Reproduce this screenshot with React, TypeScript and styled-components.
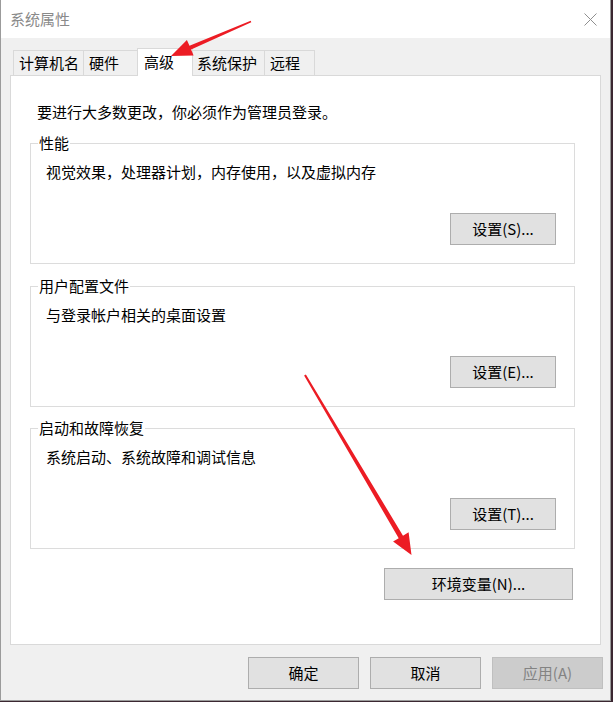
import React from 'react';
import styled, { createGlobalStyle } from 'styled-components';

const Global = createGlobalStyle`
  html, body { margin: 0; padding: 0; background: #3b2731; }
  body {
    font-family: "Noto Sans CJK SC", "Noto Sans", sans-serif;
    font-size: 15px;
    color: #000;
  }
  * { box-sizing: border-box; }
`;

const Window = styled.div`
  position: relative;
  width: 611px;
  height: 701px;
  border: 1px solid #9b9b9b;
  border-top: none;
  background: #f0f0f0;
  display: flex;
  flex-direction: column;
`;

const TitleBar = styled.div`
  height: 38px;
  flex: none;
  background: #fff;
  display: flex;
  align-items: center;
  justify-content: space-between;
  padding: 0 13px 0 9px;
`;

const Title = styled.span`
  color: #8a8a8a;
  font-size: 15px;
  line-height: 20px;
`;

const Body = styled.div`
  flex: 1;
  display: flex;
  flex-direction: column;
  padding: 10px 9px 11px 9px;
`;

const TabRow = styled.div`
  display: flex;
  align-items: flex-end;
  height: 27px;
  padding-left: 3px;
  flex: none;
`;

const Tab = styled.div<{ $w: number; $active?: boolean; $last?: boolean }>`
  width: ${(p) => p.$w}px;
  height: ${(p) => (p.$active ? 28 : 25)}px;
  border: 1px solid #d9d9d9;
  border-bottom: none;
  border-right: ${(p) => (p.$active || p.$last ? '1px solid #d9d9d9' : 'none')};
  background: ${(p) => (p.$active ? '#fff' : '#f0f0f0')};
  padding-left: ${(p) => (p.$active ? 6 : 5)}px;
  line-height: ${(p) => (p.$active ? 26 : 24)}px;
  white-space: nowrap;
  margin: ${(p) => (p.$active ? '0 -2px -1px -2px' : '0')};
  position: ${(p) => (p.$active ? 'relative' : 'static')};
  z-index: ${(p) => (p.$active ? 1 : 'auto')};
`;

const Panel = styled.div`
  flex: 1;
  background: #fff;
  border: 1px solid #d9d9d9;
  display: flex;
  flex-direction: column;
  padding-top: 26px;
`;

const Intro = styled.div`
  line-height: 20px;
  padding-left: 26px;
`;

const Group = styled.fieldset<{ $mt: number }>`
  margin: ${(p) => p.$mt}px 25px 0 19px;
  padding: 9px 18px 18px 15px;
  border: 1px solid #dcdcdc;
  min-width: 0;
`;

const Legend = styled.legend`
  padding: 0 1px;
  margin-left: -8px;
  line-height: 20px;
`;

const Desc = styled.div`
  line-height: 20px;
`;

const ButtonRow = styled.div`
  display: flex;
  justify-content: flex-end;
  margin-top: 31px;
`;

const Button = styled.button<{ $w: number }>`
  width: ${(p) => p.$w}px;
  height: 32px;
  padding: 0;
  margin: 0;
  background: #e1e1e1;
  border: 1px solid #adadad;
  border-radius: 0;
  font-family: inherit;
  font-size: 15px;
  line-height: 20px;
  color: #000;
  &:disabled {
    background: #cccccc;
    border-color: #bfbfbf;
    color: #838383;
  }
`;

const EnvButton = styled(Button)`
  align-self: flex-end;
  margin-top: 19px;
  margin-right: 27px;
`;

const Footer = styled.div`
  display: flex;
  justify-content: flex-end;
  gap: 11px;
  margin-top: 12px;
  margin-right: -2px;
  flex: none;
`;

const Overlay = styled.svg`
  position: absolute;
  left: -1px;
  top: 0;
  pointer-events: none;
  z-index: 5;
`;

type P = [number, number];

function arrow(tail: P, tip: P, wTail: number, wBase: number, headLen: number, headHalf: number): string {
  const dx = tail[0] - tip[0];
  const dy = tail[1] - tip[1];
  const len = Math.hypot(dx, dy);
  const ux = dx / len;
  const uy = dy / len;
  const nx = -uy;
  const ny = ux;
  const bx = tip[0] + ux * headLen;
  const by = tip[1] + uy * headLen;
  const pts: P[] = [
    [tail[0] + nx * wTail / 2, tail[1] + ny * wTail / 2],
    [bx + nx * wBase / 2, by + ny * wBase / 2],
    [bx + nx * headHalf, by + ny * headHalf],
    tip,
    [bx - nx * headHalf, by - ny * headHalf],
    [bx - nx * wBase / 2, by - ny * wBase / 2],
    [tail[0] - nx * wTail / 2, tail[1] - ny * wTail / 2],
  ];
  return pts.map((p) => `${p[0].toFixed(1)},${p[1].toFixed(1)}`).join(' ');
}

const CloseIcon = () => (
  <svg width="13" height="13" viewBox="0 0 13 13">
    <path d="M0.5 0.5 L12.5 12.5 M12.5 0.5 L0.5 12.5" stroke="#8f8f8f" strokeWidth="1" fill="none" />
  </svg>
);

export default function App() {
  return (
    <>
      <Global />
      <Window>
        <TitleBar>
          <Title>系统属性</Title>
          <CloseIcon />
        </TitleBar>
        <Body>
          <TabRow>
            <Tab $w={70}>计算机名</Tab>
            <Tab $w={56}>硬件</Tab>
            <Tab $w={56} $active>高级</Tab>
            <Tab $w={73}>系统保护</Tab>
            <Tab $w={51} $last>远程</Tab>
          </TabRow>
          <Panel>
            <Intro>要进行大多数更改，你必须作为管理员登录。</Intro>
            <Group $mt={11}>
              <Legend>性能</Legend>
              <Desc>视觉效果，处理器计划，内存使用，以及虚拟内存</Desc>
              <ButtonRow>
                <Button $w={106}>设置(S)...</Button>
              </ButtonRow>
            </Group>
            <Group $mt={12}>
              <Legend>用户配置文件</Legend>
              <Desc>与登录帐户相关的桌面设置</Desc>
              <ButtonRow>
                <Button $w={106}>设置(E)...</Button>
              </ButtonRow>
            </Group>
            <Group $mt={11}>
              <Legend>启动和故障恢复</Legend>
              <Desc>系统启动、系统故障和调试信息</Desc>
              <ButtonRow>
                <Button $w={106}>设置(T)...</Button>
              </ButtonRow>
            </Group>
            <EnvButton $w={189}>环境变量(N)...</EnvButton>
          </Panel>
          <Footer>
            <Button $w={111}>确定</Button>
            <Button $w={111}>取消</Button>
            <Button $w={111} disabled>应用(A)</Button>
          </Footer>
        </Body>
        <Overlay width="613" height="701" viewBox="0 0 613 701">
          <polygon points={arrow([251, 21.5], [171, 56], 1.6, 4, 21, 8.5)} fill="#ec1c24" />
          <polygon points={arrow([305, 375], [411.5, 555], 2, 5, 21, 9)} fill="#ec1c24" />
        </Overlay>
      </Window>
    </>
  );
}
